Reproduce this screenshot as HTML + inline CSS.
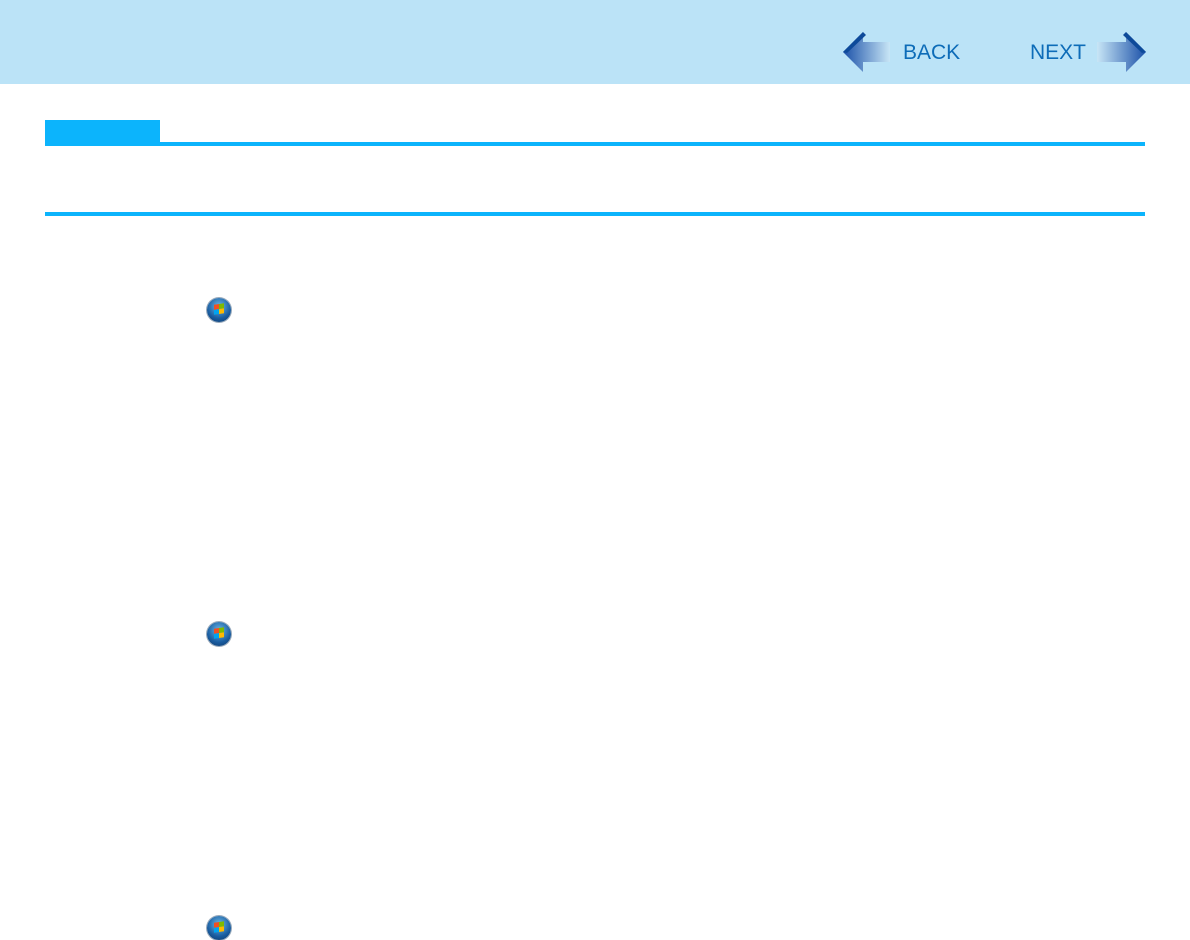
<!DOCTYPE html>
<html><head><style>
body{margin:0;width:1190px;height:940px;background:#fff;position:relative;overflow:hidden;font-family:"Liberation Sans",sans-serif}
.hdr{position:absolute;left:0;top:0;width:1190px;height:84px;background:#bbe3f7}
.t{position:absolute;color:#0d6cb8;font-size:21px;top:41px}
.ico{position:absolute;left:207px;width:24px;height:24px;border-radius:50%;background:radial-gradient(circle at 50% 35%,#6bb8e8,#1a5da0 60%,#0c3566);box-shadow:0 0 0 1px #9ab}
.ico:after{content:"";position:absolute;left:7px;top:6px;width:10px;height:10px;background:linear-gradient(90deg,#f25022 50%,#7fba00 50%) top/100% 50% no-repeat,linear-gradient(90deg,#00a4ef 50%,#ffb900 50%) bottom/100% 50% no-repeat;transform:skewY(-8deg)}
</style></head><body>
<div class="hdr"></div>
<svg style="position:absolute;left:840px;top:28px" width="60" height="48">
<defs><linearGradient id="g1" x1="0" x2="1"><stop offset="0" stop-color="#1a50a8"/><stop offset="1" stop-color="#c8e6f6"/></linearGradient>
<linearGradient id="g2" x1="1" x2="0"><stop offset="0" stop-color="#1a50a8"/><stop offset="1" stop-color="#c8e6f6"/></linearGradient></defs>
<path d="M3 24 L23 4 L23 14 L50 14 L50 34 L23 34 L23 44 Z" fill="url(#g1)"/>
<path d="M3 24 L23 4 L26 7 L7 25 Z" fill="#0d4a9a"/>
</svg>
<div class="t" style="left:903px">BACK</div>
<div class="t" style="left:1030px">NEXT</div>
<svg style="position:absolute;left:1092px;top:28px" width="60" height="48">
<path d="M54 24 L34 4 L34 14 L5 14 L5 34 L34 34 L34 44 Z" fill="url(#g2)"/>
<path d="M54 24 L34 4 L31 7 L50 25 Z" fill="#0d4a9a"/>
</svg>
<div style="position:absolute;left:45px;top:120px;width:115px;height:24px;background:#0cb4fc"></div>
<div style="position:absolute;left:45px;top:142px;width:1100px;height:4px;background:#0cb4fc"></div>
<div style="position:absolute;left:45px;top:212px;width:1100px;height:4px;background:#0cb4fc"></div>
<div class="ico" style="top:298px"></div>
<div class="ico" style="top:622px"></div>
<div class="ico" style="top:916px"></div>
</body></html>
